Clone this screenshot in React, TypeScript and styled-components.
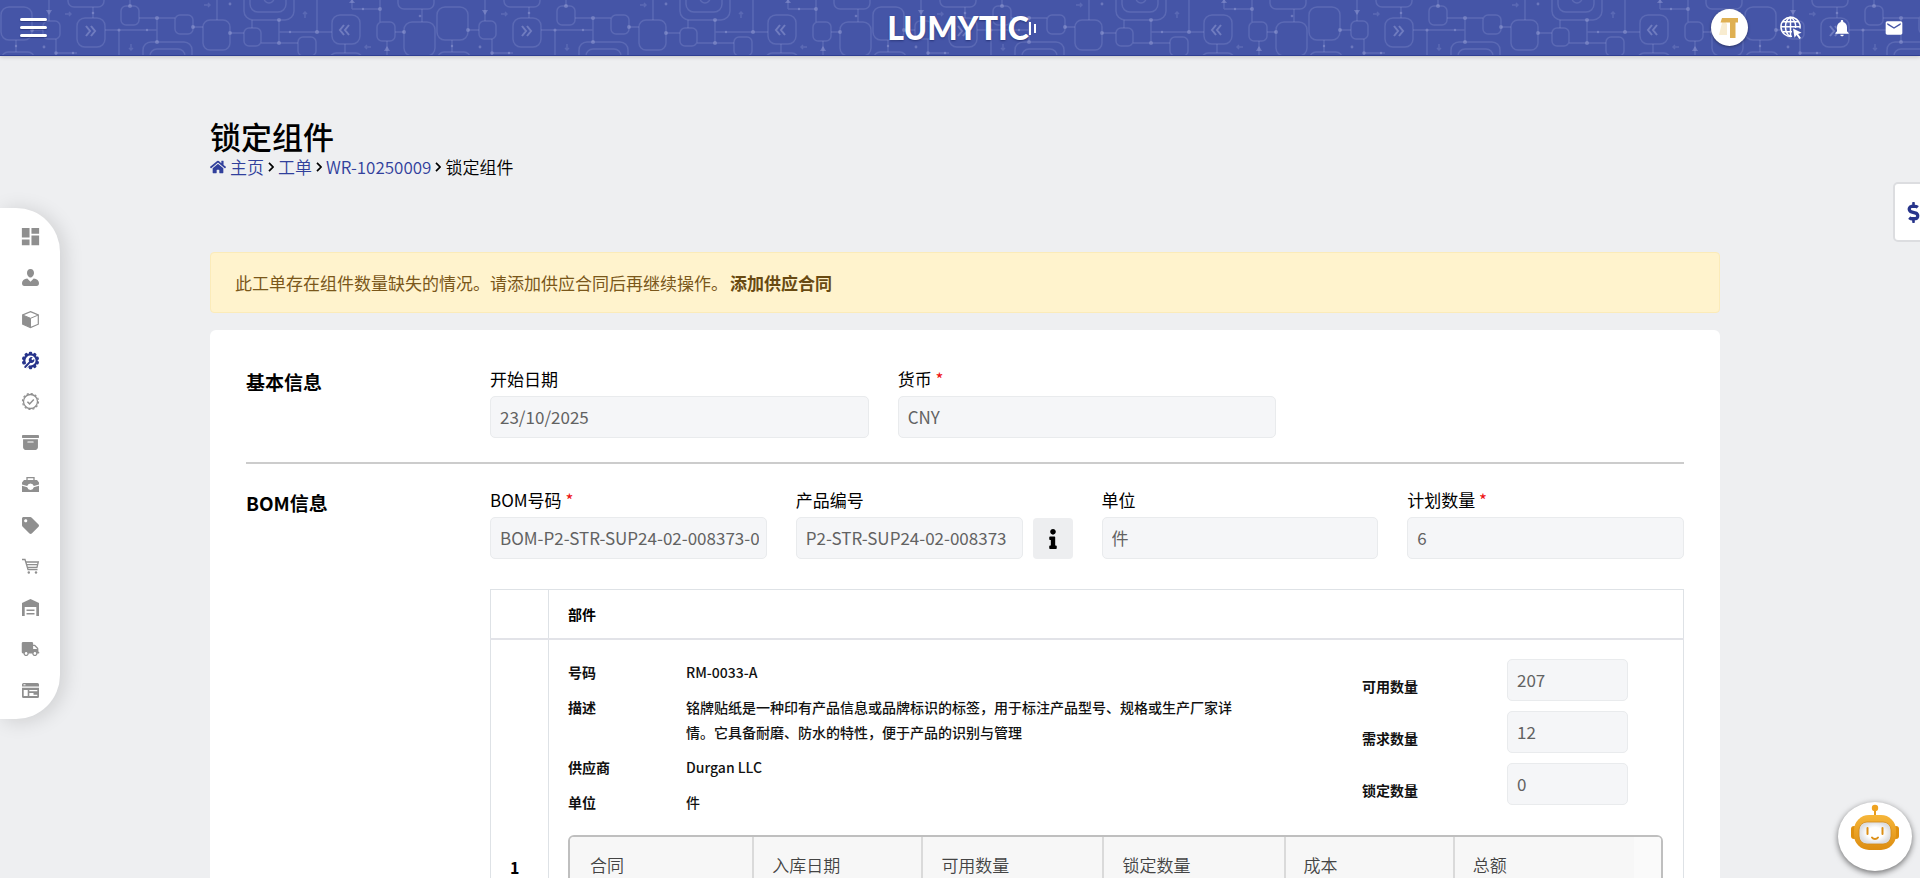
import React, { useId } from "react";
import styled, { createGlobalStyle, css } from "styled-components";
import { MdDashboard, MdEmail, MdNotifications } from "react-icons/md";
import { BsArchiveFill } from "react-icons/bs";
import { FaDollarSign, FaHome, FaInfo, FaTag, FaTruck } from "react-icons/fa";

const GlobalStyle = createGlobalStyle`
  *, *::before, *::after { box-sizing: border-box; }
  body {
    margin: 0;
    background: #eeeff1;
    color: #000;
    font-family: "Noto Sans CJK SC", "Noto Sans", sans-serif;
    font-size: 17px;
    line-height: 24px;
  }
  h1, h2, p, dl, dd { margin: 0; }
  a { color: inherit; text-decoration: none; }
  input, button { font: inherit; color: inherit; }
`;

/* ---------- shell ---------- */

const Shell = styled.div`
  display: flex;
  flex-direction: column;
  height: 100vh;
  overflow: hidden;
`;

const TopBar = styled.header`
  position: relative;
  z-index: 3;
  flex: none;
  display: grid;
  grid-template-columns: 1fr auto 1fr;
  align-items: center;
  height: 56px;
  padding: 0 16px 0 20px;
  background: #4555a7;
  border-bottom: 1px solid #2f3f93;
  box-shadow: 0 1px 4px rgba(0, 0, 0, 0.18);
  color: #fff;
`;

const Circuit = styled.svg`
  position: absolute;
  inset: 0;
  width: 100%;
  height: 100%;
`;

const IconButton = styled.button`
  display: inline-flex;
  align-items: center;
  justify-content: center;
  padding: 0;
  border: 0;
  background: none;
  cursor: pointer;
`;

const MenuButton = styled(IconButton)`
  position: relative;
  flex-direction: column;
  justify-self: start;
  gap: 5px;
  width: 27px;
`;

const MenuBar = styled.span`
  width: 100%;
  height: 3px;
  border-radius: 2px;
  background: #fff;
  box-shadow: 0 1px 1px rgba(20, 30, 90, 0.5);
`;

const Logo = styled.a`
  position: relative;
  display: flex;
  align-items: center;
  font-family: Lato, "Noto Sans", sans-serif;
  font-size: 32px;
  font-weight: 900;
  line-height: 54px;
  text-shadow: 0 1px 2px rgba(20, 30, 90, 0.6);
`;

const Tools = styled.div`
  position: relative;
  display: flex;
  align-items: center;
  justify-content: flex-end;
`;

const Avatar = styled(IconButton)`
  width: 37px;
  height: 37px;
  margin-right: 32px;
  border-radius: 50%;
  background: #fff;
  box-shadow: 0 1px 3px rgba(0, 0, 0, 0.4);
`;

const Tool = styled(IconButton)<{ $after?: number }>`
  margin-right: ${(p) => p.$after ?? 0}px;
`;

const Body = styled.div`
  flex: 1;
  display: flex;
  min-height: 0;
`;

const SideNav = styled.nav`
  position: relative;
  z-index: 2;
  flex: none;
  align-self: flex-start;
  display: flex;
  flex-direction: column;
  justify-content: space-between;
  width: 60px;
  height: 511px;
  margin-top: 152px;
  padding: 8px 0;
  border-radius: 0 44px 44px 0;
  background: #fff;
  box-shadow: 4px 2px 20px rgba(0, 0, 0, 0.14);
`;

const SideLink = styled.a<{ $active?: boolean }>`
  display: flex;
  align-items: center;
  height: 41px;
  padding-left: 19px;
  color: ${(p) => (p.$active ? "#27348b" : "#8f8f8f")};

  svg {
    width: 23px;
  }
`;

const Main = styled.main`
  flex: 1;
  min-width: 0;
  padding: 57px 200px 40px 150px;
  overflow-y: auto;
  scrollbar-width: none;
`;

/* ---------- page heading ---------- */

const PageTitle = styled.h1`
  font-size: 31px;
  font-weight: 500;
  line-height: 45px;
`;

const Crumbs = styled.nav`
  display: flex;
  align-items: center;
  gap: 4px;
  margin-top: -3px;
  color: #31409c;
  font-weight: 350;
`;

const HomeLink = styled.a`
  display: flex;
  align-items: center;
  gap: 4px;
`;

const CrumbNow = styled.span`
  color: #000;
`;

const Chevron = () => (
  <svg width="6" height="10" viewBox="0 0 6 10" fill="none" stroke="#000" strokeWidth="1.7" aria-hidden>
    <path d="M1 .8 5 5 1 9.2" />
  </svg>
);

const Alert = styled.div`
  margin-top: 73px;
  padding: 18px 24px 17px;
  border: 1px solid #fbebb9;
  border-radius: 4px;
  background: #fff3cd;
  color: #7a571a;
`;

const AlertLink = styled.a`
  margin-left: 2px;
  color: #694a12;
  font-weight: 700;
`;

/* ---------- form card ---------- */

const Card = styled.form`
  margin-top: 17px;
  padding: 36px;
  border-radius: 6px;
  background: #fff;
`;

const Section = styled.section`
  display: grid;
  grid-template-columns: 244px minmax(0, 1fr);

  & + & {
    margin-top: 24px;
    padding-top: 23px;
    border-top: 2px solid #ccc;
  }
`;

const SectionTitle = styled.h2`
  padding-top: 4px;
  font-size: 19px;
  font-weight: 700;
  line-height: 24px;
`;

const Fields = styled.div<{ $columns: number }>`
  display: grid;
  grid-template-columns: repeat(${(p) => p.$columns}, minmax(0, 1fr));
  gap: 29px;
`;

const FieldBox = styled.div`
  display: flex;
  flex-direction: column;
  gap: 4px;
`;

const FieldRow = styled.div`
  display: flex;
  align-items: flex-end;
  gap: 10px;
`;

const FieldLabel = styled.label<{ $required?: boolean }>`
  line-height: 26px;
  ${(p) =>
    p.$required &&
    css`
      &::after {
        content: " *";
        color: #e11;
      }
    `}
`;

const TextInput = styled.input<{ $short?: boolean }>`
  width: ${(p) => (p.$short ? "121px" : "100%")};
  min-width: 0;
  height: 42px;
  padding: 0 7px 1px 9px;
  border: 1px solid #e9ebed;
  border-radius: 5px;
  outline: none;
  background: #f5f6f8;
  color: #626262;
`;

const InfoButton = styled(IconButton)`
  flex: none;
  width: 40px;
  height: 41px;
  border-radius: 4px;
  background: #edeef0;
`;

/* ---------- parts table ---------- */

const PartsTable = styled.table`
  width: 100%;
  margin-top: 30px;
  border: 1px solid #dee2e6;
  border-collapse: collapse;
  font-size: 14px;
`;

const PartsHead = styled.th<{ $width?: number }>`
  width: ${(p) => (p.$width ? `${p.$width}px` : "auto")};
  height: 49px;
  padding: 0 19px;
  border: 1px solid #dee2e6;
  border-bottom: 2px solid #e2e3e8;
  font-weight: 700;
  text-align: left;
`;

const PartsCell = styled.td`
  padding: 19px 20px 20px 19px;
  border: 1px solid #dee2e6;
`;

const IndexCell = styled(PartsCell)`
  font-size: 16px;
  font-weight: 700;
  line-height: 20px;
`;

const PartInfo = styled.div`
  display: flex;
  justify-content: space-between;
  padding-right: 35px;
  color: #111;
`;

const Details = styled.dl`
  display: grid;
  grid-template-columns: 118px 39em;
  align-content: start;
  row-gap: 10px;
  padding-top: 1px;
  font-weight: 500;
  line-height: 25px;
`;

const Term = styled.dt`
  font-weight: 700;
`;

const Quantities = styled.div`
  display: grid;
  grid-template-columns: 145px 121px;
  row-gap: 10px;
  align-content: start;
  font-size: 17px;
`;

const QuantityLabel = styled.label`
  padding-top: 15px;
  font-size: 14px;
  font-weight: 700;
`;

const StockFrame = styled.div`
  min-height: 241px;
  margin-top: 20px;
  overflow: hidden;
  border: 2px solid #bfbfbf;
  border-radius: 6px;
`;

const StockTable = styled.table`
  width: 100%;
  table-layout: fixed;
  border-collapse: collapse;
  background: #f7f7f7;
  font-size: 17px;
`;

const StockHead = styled.th<{ $share: number }>`
  width: ${(p) => p.$share}%;
  height: 56px;
  padding: 0 18px;
  border-left: 2px solid #dadada;
  color: #444;
  font-weight: 350;
  text-align: left;

  &:first-child {
    padding-left: 20px;
    border-left: 0;
  }
`;

const StockTail = styled.td`
  background: #fafafa;
`;

/* ---------- floating controls ---------- */

const CurrencyTab = styled(IconButton)`
  position: fixed;
  z-index: 4;
  top: 182px;
  right: -13px;
  width: 40px;
  height: 60px;
  border: 2px solid #dcdde0;
  border-radius: 5px;
  background: #fff;
  color: #27348b;
`;

const ChatButton = styled(IconButton)`
  position: fixed;
  z-index: 4;
  right: 8px;
  bottom: 7px;
  align-items: flex-start;
  width: 74px;
  height: 69px;
  padding-top: 2px;
  border-radius: 50%;
  background: #fff;
  box-shadow: 0 2px 6px rgba(0, 0, 0, 0.55);
`;

/* ---------- drawings ---------- */

const CircuitPattern = () => {
  const id = useId();
  return (
    <Circuit aria-hidden>
      <defs>
        <pattern id={id} width="436" height="56" patternUnits="userSpaceOnUse">
          <g fill="none" stroke="#9fa6dc" strokeOpacity=".24" strokeWidth="1.4">
            <rect x="1" y="7" width="31" height="33" rx="8" />
            <rect x="43" y="21" width="17" height="18" rx="5" />
            <rect x="77" y="18" width="28" height="29" rx="8" />
            <rect x="121" y="6" width="18" height="19" rx="5" />
            <rect x="175" y="15" width="18" height="19" rx="5" />
            <rect x="203" y="20" width="27" height="30" rx="7" />
            <rect x="244" y="28" width="17" height="18" rx="5" />
            <rect x="298" y="37" width="18" height="19" rx="5" />
            <rect x="332" y="15" width="28" height="29" rx="8" />
            <rect x="377" y="22" width="18" height="19" rx="5" />
            <rect x="404" y="22" width="31" height="34" rx="8" />
            <rect x="244" y="-20" width="50" height="40" rx="9" />
            <rect x="250" y="-20" width="36" height="32" rx="8" />
            <circle cx="269" cy="-2" r="5" />
            <rect x="68" y="-12" width="36" height="19" rx="6" />
            <rect x="398" y="-10" width="36" height="19" rx="6" />
            <rect x="143" y="42" width="49" height="30" rx="8" />
            <rect x="150" y="49" width="35" height="20" rx="7" />
            <rect x="2" y="52" width="32" height="20" rx="6" />
            <rect x="330" y="53" width="32" height="20" rx="6" />
            <path d="M130 0V6M139 18H175M157 18V42M105 30H157M119 30V56M193 27H203M217 0V20M230 33H244M252 20V28M261 43H298M279 20V43M279 32H332M317 0V32M352 9H380M380 0V22M395 32H404M387 41V56M49 0V21M32 30H43M56 39V56M56 53H77M16 40V52M93 7V18M422 9V22M345 44V53M352 0V9" />
            <path d="m65 14h6m-2-2 2 2-2 2M204 5h6m-2-2 2 2-2 2M305 18v-6m-2 2 2-2 2 2M131 44v6m-2-2 2 2 2-2M371 47h-6m2-2-2 2 2 2" />
          </g>
          <g fill="#9fa6dc" fillOpacity=".42">
            <circle cx="130" cy="6" r="2" />
            <circle cx="157" cy="18" r="2" />
            <circle cx="157" cy="42" r="2" />
            <circle cx="119" cy="30" r="1.5" />
            <circle cx="147" cy="30" r="1.2" />
            <circle cx="193" cy="27" r="2" />
            <circle cx="230" cy="33" r="2" />
            <circle cx="279" cy="20" r="2" />
            <circle cx="279" cy="43" r="2" />
            <circle cx="290" cy="32" r="1.2" />
            <circle cx="317" cy="32" r="2" />
            <circle cx="380" cy="9" r="2" />
            <circle cx="363" cy="9" r="1.2" />
            <circle cx="404" cy="32" r="2" />
            <circle cx="32" cy="30" r="2" />
            <circle cx="56" cy="53" r="1.8" />
            <circle cx="73" cy="53" r="1.2" />
            <circle cx="44" cy="47" r="1.4" />
            <circle cx="16" cy="46" r="1.2" />
            <circle cx="93" cy="13" r="1.3" />
            <circle cx="230" cy="4" r="1.4" />
            <circle cx="420" cy="16" r="1.3" />
            <path d="M46 10h6l-3 5zM349 3h6l-3-4zM384 51h6l-3-5z" />
          </g>
          <g fill="none" stroke="#a9afe0" strokeOpacity=".42" strokeWidth="2">
            <path d="m86 26 4 5-4 5m5-10 4 5-4 5M344 25l-4 5 4 5m5-10-4 5 4 5" />
          </g>
        </pattern>
      </defs>
      <rect width="100%" height="100%" fill={`url(#${id})`} />
    </Circuit>
  );
};

const LogoBars = () => (
  <svg width="8" height="16" viewBox="0 0 8 16" fill="#fff" aria-hidden>
    <rect x="0" y="2" width="2" height="13" />
    <rect x="5" y="4" width="2" height="9" />
  </svg>
);

const AvatarMark = () => (
  <svg width="22" height="24" viewBox="0 0 22 24" aria-hidden>
    <path d="M4 3 0 19h8V8z" fill="#f8ecd0" />
    <path d="M3 2h16v4.500h-2.500V22h-5.500V6.500H1.500z" fill="#dfb052" />
  </svg>
);

const GlobeCursor = () => (
  <svg width="23" height="24" viewBox="0 0 23 24" fill="none" stroke="#fff" strokeWidth="1.5" aria-hidden>
    <path d="M12 20.3A9.6 9.6 0 1 1 20 12.5" />
    <path d="M10.5 1C3.500 5 4 17 10.500 20.500M10.500 1C15 4 16 8 15.500 12M10.500 1V20M1 10.700H20M2.700 5.700H18.500M2.700 15.700H12" />
    <path d="m13 12.500 8.600 4.200-3.500 1.200 2.900 4-1.700 1.200-2.800-4-2 2.700z" fill="#fff" stroke="none" />
  </svg>
);

type GlyphProps = { children: React.ReactNode };
const Glyph = ({ children }: GlyphProps) => (
  <svg viewBox="-3 -3 23 23" width="23" height="23" fill="currentColor" aria-hidden>
    {children}
  </svg>
);

const PersonIcon = () => (
  <Glyph>
    <path d="M8.500 0C11 0 12 1.700 12 4c0 2-1.500 4.500-3.500 4.500S5 6 5 4c0-2.300 1-4 3.500-4zM5.300 9.500l3.200 3.200 3.200-3.200c3.300.5 5.300 2.200 5.300 4.500 0 1.800-.7 3-2.500 3h-12C.7 17 0 15.800 0 14c0-2.300 2-4 5.300-4.500z" />
  </Glyph>
);

const BoxIcon = () => (
  <Glyph>
    <path d="M8.500.6 16.300 4v9.200l-7.800 3.300L.7 13.200V4z" fill="none" stroke="currentColor" strokeWidth="1.200" />
    <path d="M.7 4l7.800 3.300v9.200L.7 13.200z" />
    <path d="m.7 4 7.800 3.300L16.300 4M8.500 7.300v9" fill="none" stroke="currentColor" />
  </Glyph>
);

const gearTeeth = Array.from({ length: 10 }, (_, i) => i * 36);

const GearWrenchIcon = () => (
  <Glyph>
    <circle cx="8.500" cy="8.500" r="6.200" fill="none" stroke="currentColor" strokeWidth="2.200" />
    {gearTeeth.map((angle) => (
      <rect key={angle} x="6.900" y="-.2" width="3.200" height="3" rx="1" transform={`rotate(${angle} 8.500 8.500)`} />
    ))}
    <path d="M1 17.500 7 11" fill="none" stroke="#fff" strokeWidth="4" />
    <path d="M3.200 15 9 8.800" fill="none" stroke="currentColor" strokeWidth="1.900" strokeLinecap="round" />
    <path d="M7.300 9.800A3 3 0 0 1 10.800 5.200L9.300 7l1 1.200 1.900-1.300a3 3 0 0 1-3.600 4z" />
  </Glyph>
);

const ApprovedIcon = () => (
  <Glyph>
    <circle cx="8.500" cy="8.500" r="7" fill="none" stroke="currentColor" strokeWidth="1.300" />
    <circle cx="8.500" cy="8.500" r="8" fill="none" stroke="currentColor" strokeWidth="1.200" strokeDasharray="2.100 2.090" />
    <path d="m5.400 8.700 2.200 2.200 4.200-4.300" fill="none" stroke="currentColor" strokeWidth="1.500" />
  </Glyph>
);

const ToolboxIcon = () => (
  <Glyph>
    <path d="M5 4V1.600h7V4" fill="none" stroke="currentColor" strokeWidth="1.300" />
    <path d="M2 4h13l2 2.500v2l-5.200 1.500a3.400 3.400 0 0 0-6.600 0L0 8.500v-2zM0 9.800l5.200 1.500a3.400 3.400 0 0 0 6.600 0L17 9.800V16H0z" />
  </Glyph>
);

const CartIcon = () => (
  <Glyph>
    <path d="M0 1.500h3L6 11.500h9.500M3.800 4H16.300L15 9.300H5.500M4.500 6.700H15.500" fill="none" stroke="currentColor" strokeWidth="1.300" />
    <circle cx="6.800" cy="14.500" r="1.200" />
    <circle cx="14" cy="14.500" r="1.200" />
  </Glyph>
);

const WarehouseIcon = () => (
  <Glyph>
    <path d="M8.500 0 17 4v13h-2.700V8H2.700v9H0V4z" />
    <path d="M4.500 10.500h8v1.500h-8zM4.500 14h8v1.500h-8z" />
  </Glyph>
);

const BrowserIcon = () => (
  <Glyph>
    <path d="M1.500 1h14A1.500 1.500 0 0 1 17 2.500V4.500H0V2.500A1.500 1.500 0 0 1 1.500 1z" />
    <path d="M0 5.800h17V14.500A1.500 1.500 0 0 1 15.500 16h-14A1.500 1.500 0 0 1 0 14.500zM1.700 8v6h4V8zM7.300 8v1.300h8V8zM7.300 11v3h8v-1.300h-3.800V11z" fillRule="evenodd" />
    <path d="M1.500 2.300h2v1h-2z" fill="#fff" />
  </Glyph>
);

const Robot = () => {
  const id = useId();
  return (
    <svg width="50" height="48" viewBox="0 0 50 48" aria-hidden>
      <defs>
        <linearGradient id={id} x1="0" y1="0" x2="0" y2="1">
          <stop offset="0" stopColor="#f6b63a" />
          <stop offset="1" stopColor="#dd8d10" />
        </linearGradient>
        <radialGradient id={`${id}f`}>
          <stop offset=".5" stopColor="#fff" />
          <stop offset="1" stopColor="#dcdde0" />
        </radialGradient>
      </defs>
      <path d="M25 4v9" stroke="#e79c1d" strokeWidth="2" />
      <circle cx="25" cy="4" r="3.200" fill="#efa321" />
      <rect x="1" y="22" width="6" height="13" rx="3" fill="#e0910f" />
      <rect x="43" y="22" width="6" height="13" rx="3" fill="#e0910f" />
      <rect x="4" y="11" width="42" height="35" rx="15" fill={`url(#${id})`} />
      <rect x="9" y="18" width="32" height="22" rx="8" fill={`url(#${id}f)`} stroke="#d48c17" strokeWidth=".8" />
      <path d="M17.500 24v6M32.500 24v6M22 33.500c1.500 2 4.500 2 6 0" fill="none" stroke="#dc8f16" strokeWidth="2" strokeLinecap="round" />
    </svg>
  );
};

/* ---------- pieces ---------- */

type FieldProps = {
  id: string;
  label: string;
  value: string;
  required?: boolean;
  action?: React.ReactNode;
};

const Field = ({ id, label, value, required, action }: FieldProps) => (
  <FieldBox>
    <FieldLabel htmlFor={id} $required={required}>
      {label}
    </FieldLabel>
    <FieldRow>
      <TextInput id={id} defaultValue={value} readOnly />
      {action}
    </FieldRow>
  </FieldBox>
);

const navItems = [
  { href: "#dashboard", icon: <MdDashboard size={23} /> },
  { href: "#customers", icon: <PersonIcon /> },
  { href: "#products", icon: <BoxIcon /> },
  { href: "#production", icon: <GearWrenchIcon />, active: true },
  { href: "#quality", icon: <ApprovedIcon /> },
  { href: "#archive", icon: <BsArchiveFill size={17} /> },
  { href: "#tools", icon: <ToolboxIcon /> },
  { href: "#pricing", icon: <FaTag size={17} /> },
  { href: "#purchases", icon: <CartIcon /> },
  { href: "#warehouse", icon: <WarehouseIcon /> },
  { href: "#delivery", icon: <FaTruck size={14} /> },
  { href: "#reports", icon: <BrowserIcon /> },
];

const details = [
  ["号码", "RM-0033-A"],
  ["描述", "铭牌贴纸是一种印有产品信息或品牌标识的标签，用于标注产品型号、规格或生产厂家详情。它具备耐磨、防水的特性，便于产品的识别与管理"],
  ["供应商", "Durgan LLC"],
  ["单位", "件"],
];

const quantities = [
  ["available", "可用数量", "207"],
  ["needed", "需求数量", "12"],
  ["locked", "锁定数量", "0"],
];

const stockColumns: [string, number][] = [
  ["合同", 16.8],
  ["入库日期", 15.5],
  ["可用数量", 16.6],
  ["锁定数量", 16.6],
  ["成本", 15.5],
  ["总额", 16.5],
];

export default function App() {
  return (
    <Shell>
      <GlobalStyle />
      <TopBar>
        <CircuitPattern />
        <MenuButton type="button" aria-label="菜单">
          <MenuBar />
          <MenuBar />
          <MenuBar />
        </MenuButton>
        <Logo href="#home">
          LUMYTIC
          <LogoBars />
        </Logo>
        <Tools>
          <Avatar type="button" aria-label="账户">
            <AvatarMark />
          </Avatar>
          <Tool type="button" aria-label="语言" $after={29}>
            <GlobeCursor />
          </Tool>
          <Tool type="button" aria-label="通知" $after={32}>
            <MdNotifications size={20} />
          </Tool>
          <Tool type="button" aria-label="邮件">
            <MdEmail size={20} />
          </Tool>
        </Tools>
      </TopBar>

      <Body>
        <SideNav>
          {navItems.map((item) => (
            <SideLink key={item.href} href={item.href} $active={item.active}>
              {item.icon}
            </SideLink>
          ))}
        </SideNav>

        <Main>
          <PageTitle>锁定组件</PageTitle>
          <Crumbs>
            <HomeLink href="#home">
              <FaHome size={16} />
              主页
            </HomeLink>
            <Chevron />
            <a href="#orders">工单</a>
            <Chevron />
            <a href="#order">WR-10250009</a>
            <Chevron />
            <CrumbNow>锁定组件</CrumbNow>
          </Crumbs>

          <Alert role="alert">
            此工单存在组件数量缺失的情况。请添加供应合同后再继续操作。
            <AlertLink href="#contract">添加供应合同</AlertLink>
          </Alert>

          <Card>
            <Section>
              <SectionTitle>基本信息</SectionTitle>
              <Fields $columns={3}>
                <Field id="start" label="开始日期" value="23/10/2025" />
                <Field id="currency" label="货币" value="CNY" required />
              </Fields>
            </Section>

            <Section>
              <SectionTitle>BOM信息</SectionTitle>
              <div>
                <Fields $columns={4}>
                  <Field id="bom" label="BOM号码" value="BOM-P2-STR-SUP24-02-008373-01" required />
                  <Field
                    id="product"
                    label="产品编号"
                    value="P2-STR-SUP24-02-008373"
                    action={
                      <InfoButton type="button" aria-label="产品详情">
                        <FaInfo size={20} />
                      </InfoButton>
                    }
                  />
                  <Field id="unit" label="单位" value="件" />
                  <Field id="planned" label="计划数量" value="6" required />
                </Fields>

                <PartsTable>
                  <thead>
                    <tr>
                      <PartsHead $width={58} />
                      <PartsHead>部件</PartsHead>
                    </tr>
                  </thead>
                  <tbody>
                    <tr>
                      <IndexCell>1</IndexCell>
                      <PartsCell>
                        <PartInfo>
                          <Details>
                            {details.map(([term, text]) => (
                              <React.Fragment key={term}>
                                <Term>{term}</Term>
                                <dd>{text}</dd>
                              </React.Fragment>
                            ))}
                          </Details>
                          <Quantities>
                            {quantities.map(([id, label, value]) => (
                              <React.Fragment key={id}>
                                <QuantityLabel htmlFor={id}>{label}</QuantityLabel>
                                <TextInput id={id} defaultValue={value} readOnly $short />
                              </React.Fragment>
                            ))}
                          </Quantities>
                        </PartInfo>

                        <StockFrame>
                          <StockTable>
                            <thead>
                              <tr>
                                {stockColumns.map(([name, share]) => (
                                  <StockHead key={name} $share={share} scope="col">
                                    {name}
                                  </StockHead>
                                ))}
                                <StockTail />
                              </tr>
                            </thead>
                          </StockTable>
                        </StockFrame>
                      </PartsCell>
                    </tr>
                  </tbody>
                </PartsTable>
              </div>
            </Section>
          </Card>
        </Main>
      </Body>

      <CurrencyTab type="button" aria-label="汇率">
        <FaDollarSign size={21} />
      </CurrencyTab>
      <ChatButton type="button" aria-label="客服">
        <Robot />
      </ChatButton>
    </Shell>
  );
}
